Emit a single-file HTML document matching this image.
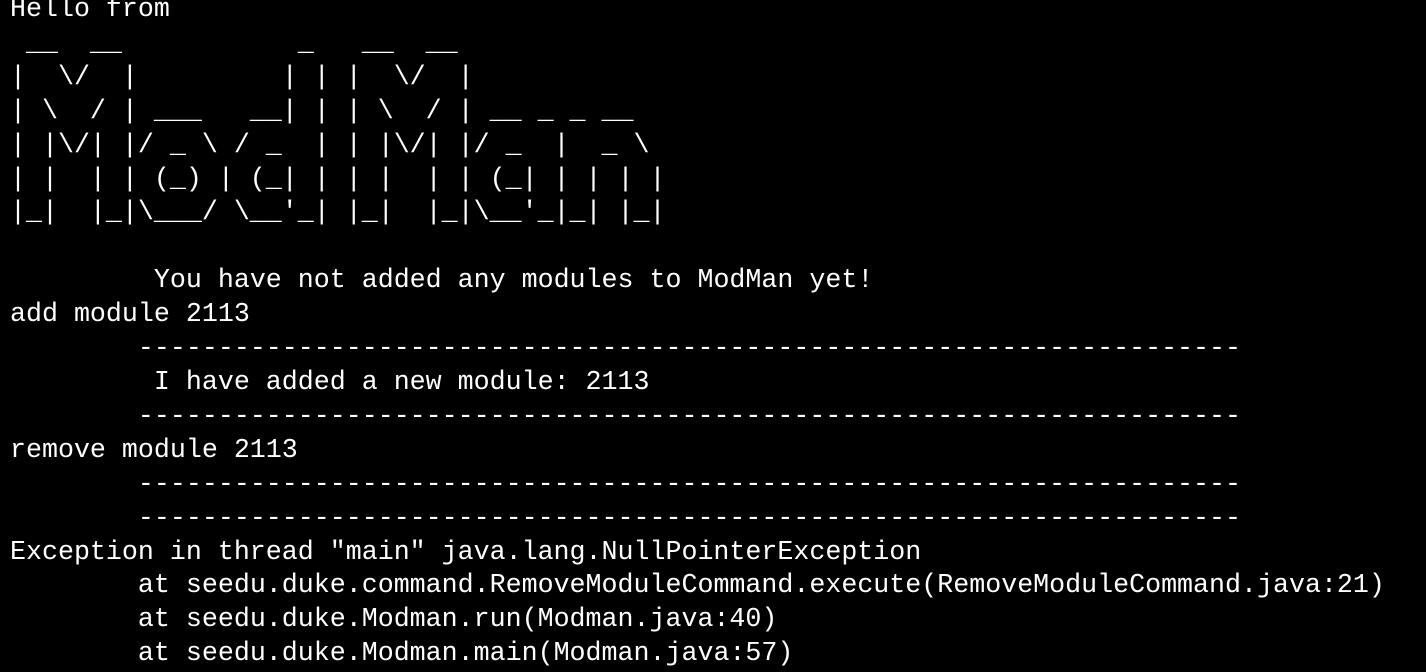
<!DOCTYPE html>
<html><head><meta charset="utf-8"><style>
html,body{margin:0;padding:0;background:#000;width:1426px;height:668px;overflow:hidden}
pre{margin:0;position:absolute;left:10px;top:-6px;color:#fff;font-family:"Liberation Mono",monospace;font-size:26.65px;line-height:33.9px;tab-size:8;-moz-tab-size:8;white-space:pre}
</style></head><body><pre>Hello from
 __  __           _   __  __
|  \/  |         | | |  \/  |
| \  / | ___   __| | | \  / | __ _ _ __
| |\/| |/ _ \ / _  | | |\/| |/ _  |  _ \
| |  | | (_) | (_| | | |  | | (_| | | | |
|_|  |_|\___/ \__'_| |_|  |_|\__'_|_| |_|

	 You have not added any modules to ModMan yet!
add module 2113
	---------------------------------------------------------------------
	 I have added a new module: 2113
	---------------------------------------------------------------------
remove module 2113
	---------------------------------------------------------------------
	---------------------------------------------------------------------
Exception in thread "main" java.lang.NullPointerException
	at seedu.duke.command.RemoveModuleCommand.execute(RemoveModuleCommand.java:21)
	at seedu.duke.Modman.run(Modman.java:40)
	at seedu.duke.Modman.main(Modman.java:57)
</pre></body></html>
